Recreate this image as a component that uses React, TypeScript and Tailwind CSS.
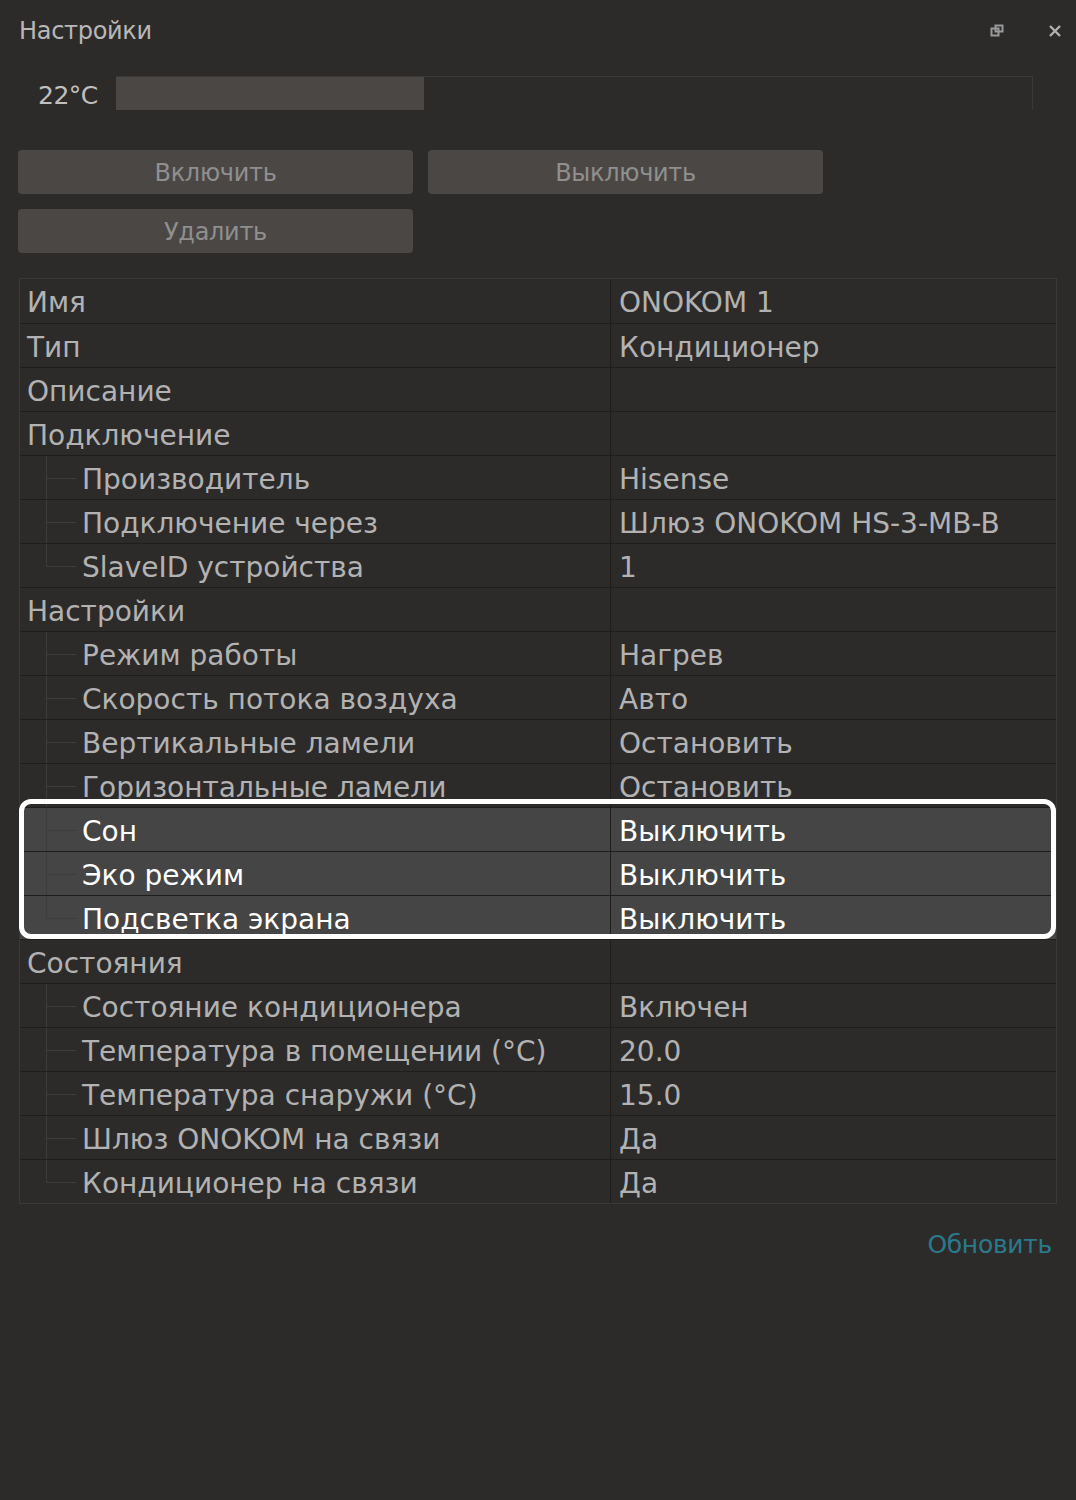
import React from 'react';

type Row = { label: string; value?: string; child?: boolean; last?: boolean; hl?: boolean };

const rows: Row[] = [
  { label: 'Имя', value: 'ONOKOM 1' },
  { label: 'Тип', value: 'Кондиционер' },
  { label: 'Описание' },
  { label: 'Подключение' },
  { label: 'Производитель', value: 'Hisense', child: true },
  { label: 'Подключение через', value: 'Шлюз ONOKOM HS-3-MB-B', child: true },
  { label: 'SlaveID устройства', value: '1', child: true, last: true },
  { label: 'Настройки' },
  { label: 'Режим работы', value: 'Нагрев', child: true },
  { label: 'Скорость потока воздуха', value: 'Авто', child: true },
  { label: 'Вертикальные ламели', value: 'Остановить', child: true },
  { label: 'Горизонтальные ламели', value: 'Остановить', child: true },
  { label: 'Сон', value: 'Выключить', child: true, hl: true },
  { label: 'Эко режим', value: 'Выключить', child: true, hl: true },
  { label: 'Подсветка экрана', value: 'Выключить', child: true, last: true, hl: true },
  { label: 'Состояния' },
  { label: 'Состояние кондиционера', value: 'Включен', child: true },
  { label: 'Температура в помещении (°C)', value: '20.0', child: true },
  { label: 'Температура снаружи (°C)', value: '15.0', child: true },
  { label: 'Шлюз ONOKOM на связи', value: 'Да', child: true },
  { label: 'Кондиционер на связи', value: 'Да', child: true, last: true },
];

const font = { fontFamily: '"DejaVu Sans", "Noto Sans", sans-serif' };

function TreeRow({ r, first }: { r: Row; first: boolean }) {
  const text = r.hl ? 'text-white' : 'text-[#b2b2b2]';
  return (
    <div className={`flex h-[44px] ${first ? '' : 'border-t border-[#1f1e1d]'} ${r.hl ? 'bg-[#454545]' : ''}`}>
      <div className="relative flex w-[591px] items-center border-r border-[#1f1e1d]">
        {r.child && (
          <>
            <div className={`absolute left-[26px] top-0 w-px bg-[#3e3d3c] ${r.last ? 'h-1/2' : 'h-full'}`} />
            <div className="absolute left-[26px] top-1/2 h-px w-[30px] bg-[#3e3d3c]" />
          </>
        )}
        <span className={`${r.child ? 'pl-[62px]' : 'pl-[7px]'} pt-[4px] ${text} whitespace-nowrap text-[28px] leading-none`}>
          {r.label}
        </span>
      </div>
      <div className="flex flex-1 items-center pl-[8px]">
        <span className={`${text} pt-[4px] whitespace-nowrap text-[28px] leading-none`}>{r.value ?? ''}</span>
      </div>
    </div>
  );
}

export default function App() {
  const before = rows.slice(0, 12);
  const hl = rows.slice(12, 15);
  const after = rows.slice(15);
  return (
    <div className="min-h-[1500px] w-[1076px] bg-[#2d2b2a]" style={font}>
      <div className="flex h-[62px] items-center justify-between pl-[19px] pr-[14px]">
        <span className="text-[24px] text-[#b8b8b8] tracking-[-0.3px]">Настройки</span>
        <div className="flex items-center gap-[44px]">
          <svg width="14" height="14" viewBox="0 0 14 14" className="text-[#9a9a9a]">
            <rect x="1.5" y="4.5" width="7" height="7" fill="none" stroke="currentColor" strokeWidth="2" />
            <rect x="5.5" y="1.5" width="7" height="6" fill="none" stroke="currentColor" strokeWidth="2" />
          </svg>
          <svg width="14" height="14" viewBox="0 0 14 14" className="text-[#b0b0b0]">
            <path d="M2 2 L12 12 M12 2 L2 12" stroke="currentColor" strokeWidth="2.4" />
          </svg>
        </div>
      </div>

      <div className="mt-[7px] flex h-[48px] items-center pl-[38px] pr-[43px]">
        <span className="w-[78px] pt-[6px] text-[25px] text-[#c0c0c0] tracking-[-0.5px]">22°C</span>
        <div className="flex h-[34px] flex-1 border-t border-r border-[#3b3938]">
          <div className="h-full w-[308px] bg-[#4b4745]" />
        </div>
      </div>

      <div className="mt-[33px] flex flex-col gap-[15px] px-[18px]">
        <div className="flex gap-[15px]">
          <button className="h-[44px] w-[395px] rounded-[4px] bg-[#4b4745] pt-[2px] text-[24px] text-[#8f8f8f] tracking-[-0.3px]">Включить</button>
          <button className="h-[44px] w-[395px] rounded-[4px] bg-[#4b4745] pt-[2px] text-[24px] text-[#8f8f8f] tracking-[-0.3px]">Выключить</button>
        </div>
        <div className="flex">
          <button className="h-[44px] w-[395px] rounded-[4px] bg-[#4b4745] pt-[2px] text-[24px] text-[#8f8f8f] tracking-[-0.3px]">Удалить</button>
        </div>
      </div>

      <div className="mx-[19px] mt-[25px] w-[1038px] border border-[#3b3938]">
        {before.map((r, i) => (
          <TreeRow key={r.label} r={r} first={i === 0} />
        ))}
        <div className="relative">
          {hl.map((r) => (
            <TreeRow key={r.label} r={r} first={false} />
          ))}
          <div className="pointer-events-none absolute -left-[1px] right-0 -top-[8px] bottom-0 rounded-[12px] border-[5px] border-white" />
        </div>
        {after.map((r) => (
          <TreeRow key={r.label} r={r} first={false} />
        ))}
      </div>

      <div className="flex justify-end pr-[24px] pt-[22px]">
        <span className="text-[25px] text-[#2a7a8c] tracking-[-0.3px]">Обновить</span>
      </div>
    </div>
  );
}
